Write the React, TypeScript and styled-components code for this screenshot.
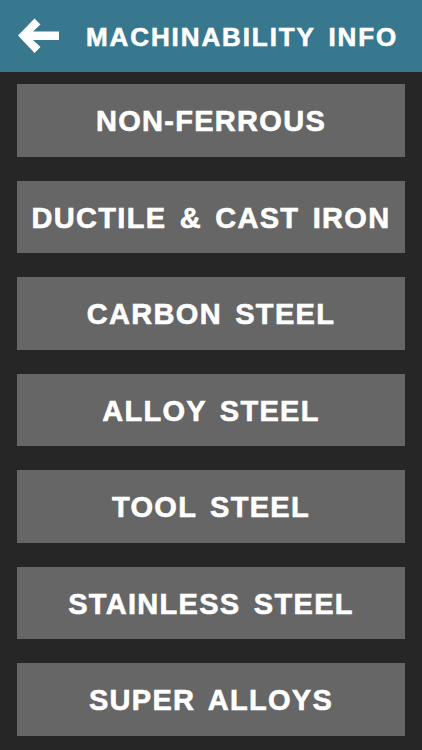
import styled, { createGlobalStyle } from "styled-components";

const Global = createGlobalStyle`
    html, body {
        margin: 0;
        padding: 0;
        background: #262626;
    }
    body {
        font-family: "Liberation Sans", Arial, sans-serif;
    }
`

const Page = styled.div`
    width: 422px;
    height: 750px;
    display: flex;
    flex-direction: column;
    background: #262626;
    overflow: hidden;
`

const Header = styled.header`
    height: 72px;
    flex: none;
    display: flex;
    align-items: center;
    background: #37788f;
    padding-left: 18px;
    box-sizing: border-box;
`

const BackButton = styled.button`
    border: 0;
    background: none;
    padding: 0;
    margin: 0;
    width: 41px;
    height: 36px;
    display: flex;
    cursor: pointer;
`

const Title = styled.h1`
    margin: 2px 0 0 27px;
    color: #ffffff;
    font-family: "Liberation Sans", Arial, sans-serif;
    font-size: 26px;
    font-weight: 700;
    letter-spacing: 1.9px;
    word-spacing: 4px;
    white-space: nowrap;
    -webkit-text-stroke: 0.6px #ffffff;
`

const List = styled.main`
    display: flex;
    flex-direction: column;
    gap: 24px;
    padding: 12px 17px 0 17px;
`

const Item = styled.button`
    height: 72.5px;
    border: 0;
    margin: 0;
    padding: 3px 0 0 0;
    background: #666666;
    color: #ffffff;
    font-family: "Liberation Sans", Arial, sans-serif;
    font-size: 29px;
    font-weight: 700;
    letter-spacing: 1.3px;
    word-spacing: 4px;
    white-space: nowrap;
    -webkit-text-stroke: 0.6px #ffffff;
    display: flex;
    align-items: center;
    justify-content: center;
    cursor: pointer;
`

const Arrow = () => (
    <svg width="41" height="36" viewBox="0 0 41 36">
        <polygon
            fill="#ffffff"
            points="0,17.5 16.5,0.5 22.5,6.5 15,13.5 41,13.5 41,22 15,22 22.5,29 16.5,35 "
        />
    </svg>
)

const materials = [
    "NON-FERROUS",
    "DUCTILE & CAST IRON",
    "CARBON STEEL",
    "ALLOY STEEL",
    "TOOL STEEL",
    "STAINLESS STEEL",
    "SUPER ALLOYS",
]

export default function App() {
    return <Page>
        <Global />
        <Header>
            <BackButton aria-label="back"><Arrow /></BackButton>
            <Title>MACHINABILITY INFO</Title>
        </Header>
        <List>
            {materials.map((m) => <Item key={m}>{m}</Item>)}
        </List>
    </Page>
}
